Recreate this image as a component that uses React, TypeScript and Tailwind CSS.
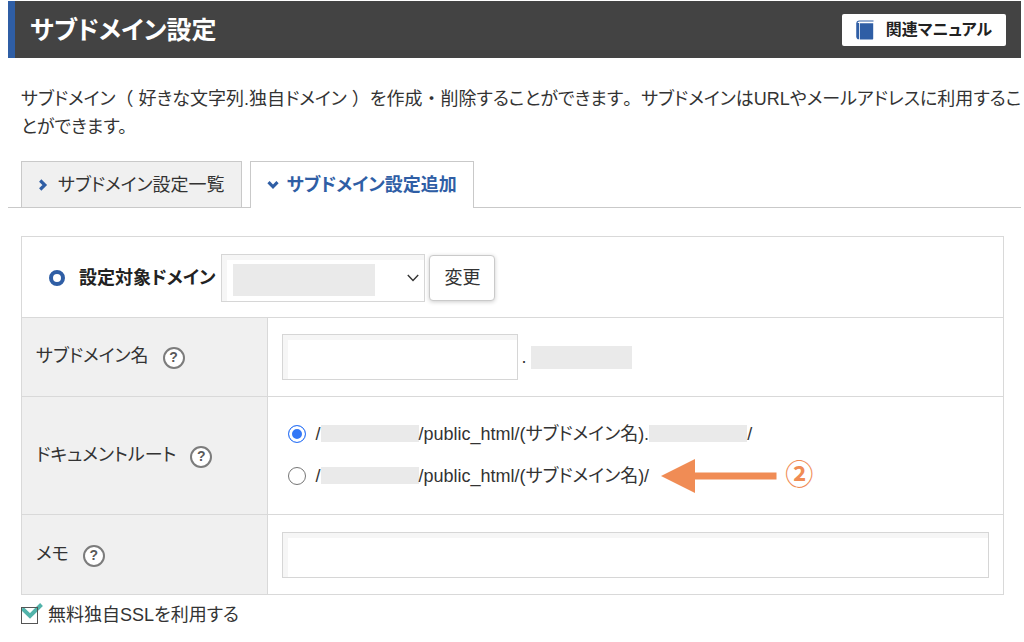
import { useState } from "react";

function HelpButton({ label }: { label: string }) {
  return (
    <button
      type="button"
      aria-label={label}
      className="mt-1 flex size-[22px] shrink-0 items-center justify-center rounded-full border-2 border-[#7c7c7c] bg-white pb-0.5 text-sm leading-none font-bold text-[#5a5a5a]"
    >
      ?
    </button>
  );
}

function Masked({ className }: { className: string }) {
  return <span aria-hidden="true" className={`inline-block shrink-0 bg-[#eaeaea] ${className}`} />;
}

/* Punctuation keeps its full-width box while kana are set proportionally. */
function Full({ children }: { children: string }) {
  return <span className="[font-feature-settings:normal]">{children}</span>;
}

function BookIcon() {
  return (
    <svg width="18" height="20" viewBox="0 0 18 20" aria-hidden="true">
      <path d="M17.5 1H3.2C1.8 1 1 1.9 1 3V17.5" fill="none" stroke="#2f5ea5" strokeWidth="1.2" />
      <path d="M0.6 3H3V19.2H2.6C1.4 19.2 0.6 18.6 0.6 17.4Z" fill="#2f5ea5" />
      <path d="M3.8 3.2H17.2V18.4C17.2 19 16.8 19.4 16.2 19.4H3.8Z" fill="#2f5ea5" />
    </svg>
  );
}

function ChevronMark({ down = false }: { down?: boolean }) {
  return down ? (
    <svg width="12" height="10" viewBox="0 0 12 10" aria-hidden="true">
      <path d="M1.5 2.2L6 6.8L10.5 2.2" fill="none" stroke="#2f5ea5" strokeWidth="3.2" />
    </svg>
  ) : (
    <svg width="10" height="12" viewBox="0 0 10 12" aria-hidden="true">
      <path d="M2.2 1.5L6.8 6L2.2 10.5" fill="none" stroke="#2f5ea5" strokeWidth="3.2" />
    </svg>
  );
}

function Arrow() {
  return (
    <svg width="116" height="34" viewBox="0 0 116 34" aria-hidden="true" className="shrink-0">
      <path d="M0 17L34 0V13.5H115.5V20.5H34V34Z" fill="#f08c55" />
    </svg>
  );
}

const field = "border border-[#d6d6d6] bg-white px-3 shadow-[inset_5px_5px_0_#f6f6f6] outline-none";
const headCell = "w-1/4 border border-[#d9d9d9] bg-[#f0f0f0] px-3.5 pb-0.5 text-left font-normal";
const dataCell = "border border-[#d9d9d9] px-3.5";
const radio =
  "m-0 flex size-[18px] shrink-0 appearance-none rounded-full border border-[#767676] bg-white checked:border-[#3478f6] checked:bg-[#3478f6] checked:shadow-[inset_0_0_0_3px_white]";

export default function App() {
  const [root, setRoot] = useState("domain");
  const [ssl, setSsl] = useState(true);

  return (
    <div className="bg-white pt-px pr-[3px] pb-3 pl-2 font-['Liberation_Sans','Noto_Sans_CJK_JP',sans-serif] text-lg leading-7 text-[#333] [font-feature-settings:'palt']">
      <header className="flex h-[57px] items-center justify-between border-l-[7px] border-[#2f5ea5] bg-[#434343] pr-[15px] pl-[15px]">
        <h1 className="text-[25px] font-bold text-white">サブドメイン設定</h1>
        <a href="#manual" className="flex h-8 items-center gap-3 rounded-xs bg-white px-3.5 text-base font-bold text-[#222]">
          <BookIcon />
          関連マニュアル
        </a>
      </header>

      <p className="mt-[27px] -mr-[3px] pl-[13px]">
        サブドメイン<Full>（</Full> 好きな文字列.独自ドメイン <Full>）</Full>を作成<Full>・</Full>
        削除することができます<Full>。</Full>
        <span>サブドメインはURLやメールアドレスに利用するこ</span>
        <span>とができます。</span>
      </p>

      <nav className="mt-5 flex gap-2 border-b border-[#c9c9c9] pl-[13px]">
        <a href="#list" className="flex h-[46px] items-center gap-2.5 border border-b-0 border-[#c9c9c9] bg-[#f0f0f0] px-4">
          <ChevronMark />
          サブドメイン設定一覧
        </a>
        <a
          href="#add"
          aria-current="page"
          className="-mb-px flex h-[47px] items-center gap-2 border border-b-0 border-[#c9c9c9] bg-white px-4 font-bold text-[#2f5ea5]"
        >
          <ChevronMark down />
          サブドメイン設定追加
        </a>
      </nav>

      <form className="mt-7 ml-[13px]" onSubmit={(event) => event.preventDefault()}>
        <div className="mr-[17px]">
          <div className="flex h-[81px] items-center border border-b-0 border-[#d9d9d9] pt-px pl-[27px]">
            <span aria-hidden="true" className="mr-3.5 size-4 rounded-full border-4 border-[#2f5ea5]" />
            <label htmlFor="target" className="mr-1.5 font-bold text-[#222]">
              設定対象ドメイン
            </label>
            <div className="relative mr-1">
              <select id="target" className={`block h-12 w-[204px] appearance-none ${field}`}>
                <option value="current"></option>
              </select>
              <Masked className="pointer-events-none absolute top-2.5 left-3 h-8 w-[142px]" />
              <svg width="12" height="8" viewBox="0 0 12 8" aria-hidden="true" className="pointer-events-none absolute top-5 right-1.5">
                <path d="M0.8 1L6 6.4L11.2 1" fill="none" stroke="#333" strokeWidth="1.4" />
              </svg>
            </div>
            <button
              type="submit"
              className="h-[46px] rounded border border-[#cacaca] bg-white px-3.5 shadow-[0_1px_4px_rgba(0,0,0,0.2)]"
            >
              変更
            </button>
          </div>

          <table className="w-full table-fixed border-collapse border border-[#d9d9d9]">
            <tbody>
              <tr className="h-[79px]">
                <th scope="row" className={headCell}>
                  <div className="flex items-center gap-3.5">
                    <label htmlFor="subdomain">サブドメイン名</label>
                    <HelpButton label="サブドメイン名" />
                  </div>
                </th>
                <td className={dataCell}>
                  <div className="flex items-center">
                    <input id="subdomain" type="text" className={`h-[46px] w-[236px] ${field}`} />
                    <span className="px-1">.</span>
                    <Masked className="h-[23px] w-[101px]" />
                  </div>
                </td>
              </tr>
              <tr className="h-[118px]">
                <th scope="row" className={headCell}>
                  <div className="flex items-center gap-3.5">
                    <span>ドキュメントルート</span>
                    <HelpButton label="ドキュメントルート" />
                  </div>
                </th>
                <td className={dataCell}>
                  <div className="flex flex-col gap-2 pb-0.5 pl-1.5">
                    <label className="flex h-[34px] items-center">
                      <input
                        type="radio"
                        name="root"
                        checked={root === "domain"}
                        onChange={() => setRoot("domain")}
                        className={`mr-2.5 ${radio}`}
                      />
                      /<Masked className="h-[17px] w-[98px]" />
                      /public_html/(サブドメイン名).
                      <Masked className="h-[17px] w-[98px]" />/
                    </label>
                    <div className="flex h-[34px] items-center gap-3">
                      <label className="flex items-center">
                        <input
                          type="radio"
                          name="root"
                          checked={root === "public"}
                          onChange={() => setRoot("public")}
                          className={`mr-2.5 ${radio}`}
                        />
                        /<Masked className="h-[17px] w-[98px]" />
                        /public_html/(サブドメイン名)/
                      </label>
                      <div className="flex items-center gap-2 text-[28px] font-bold text-[#f08c55]">
                        <Arrow />
                        <span>②</span>
                      </div>
                    </div>
                  </div>
                </td>
              </tr>
              <tr className="h-20">
                <th scope="row" className={headCell}>
                  <div className="flex items-center gap-3.5">
                    <label htmlFor="memo">メモ</label>
                    <HelpButton label="メモ" />
                  </div>
                </th>
                <td className={dataCell}>
                  <input id="memo" type="text" className={`block h-[46px] w-full ${field}`} />
                </td>
              </tr>
            </tbody>
          </table>
        </div>

        <label className="mt-1.5 flex items-center gap-2.5">
          <span className="relative flex">
            {ssl && (
              <svg width="22" height="18" viewBox="0 0 22 18" aria-hidden="true" className="pointer-events-none absolute -top-1 left-0">
                <path d="M1.2 5.5L9 13L20.5 1.5" fill="none" stroke="#52b3aa" strokeWidth="4" />
              </svg>
            )}
            <input
              type="checkbox"
              checked={ssl}
              onChange={(event) => setSsl(event.target.checked)}
              className="relative m-0 size-[17px] appearance-none border border-[#555]"
            />
          </span>
          無料独自SSLを利用する
        </label>
      </form>
    </div>
  );
}
